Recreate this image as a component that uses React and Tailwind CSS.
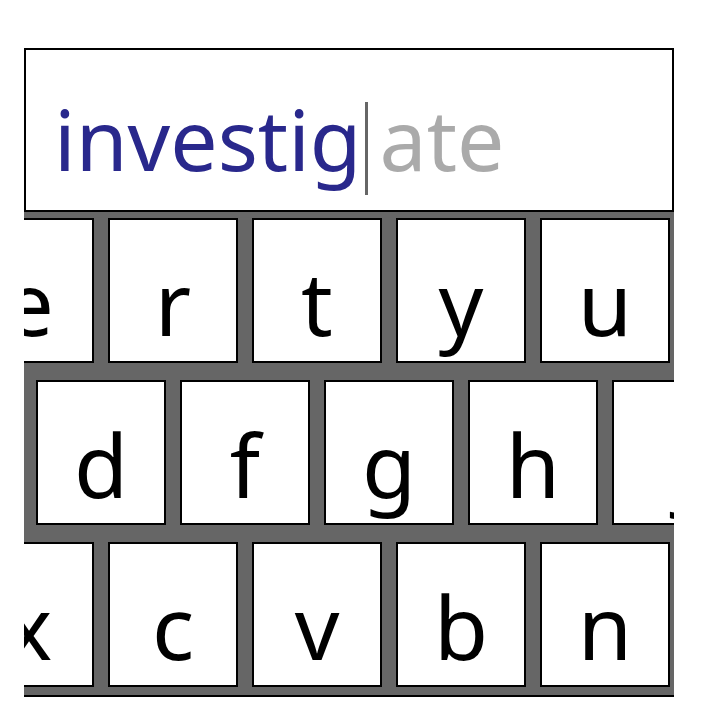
const rows = [
    { offset: "ml-[-60px]", keys: ["e", "r", "t", "y", "u", "i"] },
    { offset: "ml-[12px]", keys: ["d", "f", "g", "h", "j"] },
    { offset: "ml-[-60px]", keys: ["x", "c", "v", "b", "n", "m"] },
];

function Key({ label }) {
    // the j key is cut by the edge, its glyph sits a bit further right in the original
    const shift = label === "j" ? "pl-[18px]" : "";
    return (
        <div className={`w-[130px] h-[145px] shrink-0 bg-white border-2 border-black text-center pt-[38px] text-[88px] leading-none text-black ${shift}`}>
            {label}
        </div>
    );
}

export default function App() {
    return (
        <div
            className="min-h-screen bg-white pt-[48px] pl-[24px]"
            style={{ fontFamily: '"Noto Sans", "Open Sans", sans-serif' }}
        >
            {/* text field with the typed part and the suggestion */}
            <div className="w-[650px] h-[164px] border-2 border-black bg-white flex items-start pt-[47px] pl-[28px]">
                <span className="text-[84px] leading-none text-[#29288c]">investig</span>
                <span className="w-[3px] h-[93px] bg-[#666666] mt-[5px] ml-[3px] mr-[12px] shrink-0" />
                <span className="text-[84px] leading-none text-[#aaaaaa]">ate</span>
            </div>

            {/* keyboard, clipped at both sides */}
            <div className="w-[650px] bg-[#666666] border-b-2 border-black overflow-hidden pt-[6px] pb-[8px] flex flex-col gap-[17px]">
                {rows.map((row, i) => (
                    <div key={i} className={`flex gap-[14px] ${row.offset}`}>
                        {row.keys.map((k) => (
                            <Key key={k} label={k} />
                        ))}
                    </div>
                ))}
            </div>
        </div>
    );
}
